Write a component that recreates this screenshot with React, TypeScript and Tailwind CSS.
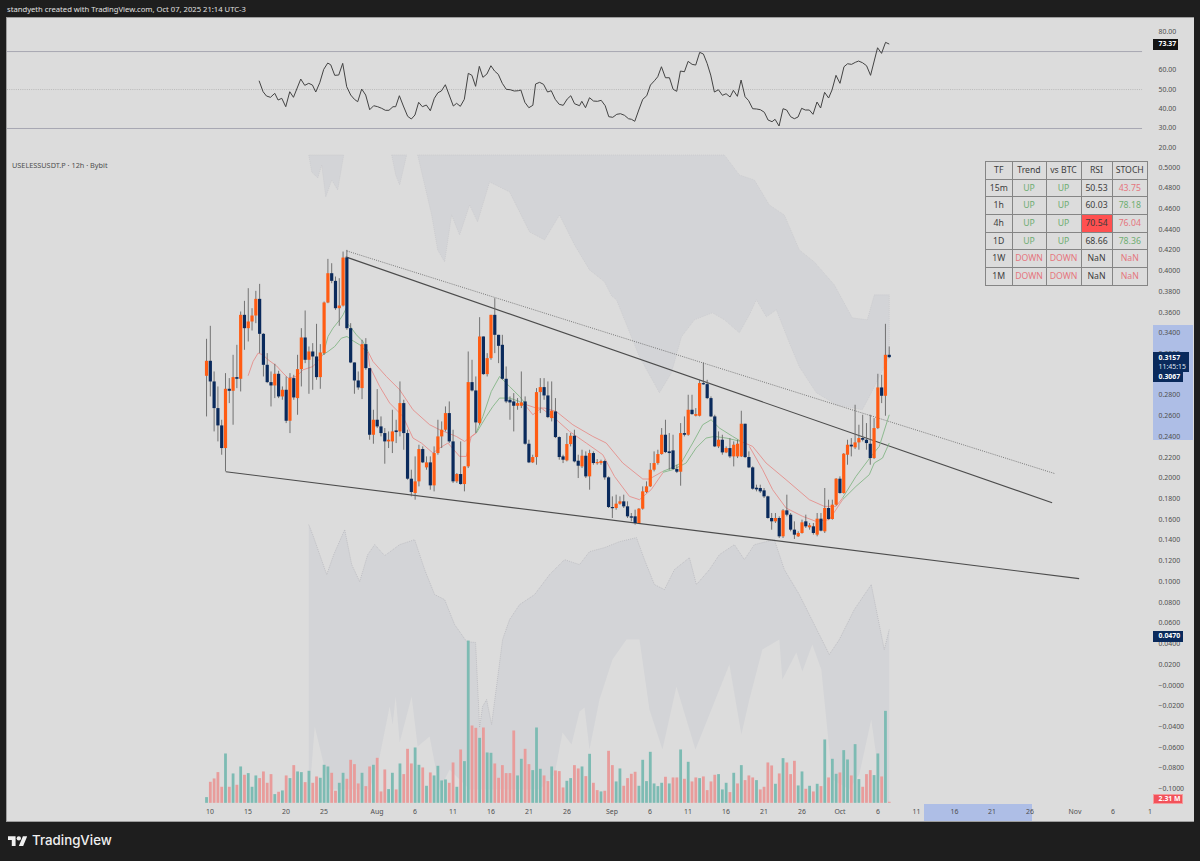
import React from "react";

type C = [number, number, number, number, number];
const A: C[] = [
[297,530,363,408,1],[258,470,363,425,0],[395,575,425,505,0],[440,605,505,557,0],[540,645,557,625,0],[400,695,447,625,1],[415,490,447,453,0],[345,555,412,453,1],[315,445,412,417,0],[215,455,225,417,1],
[183,330,225,265,0],[145,305,245,265,1],[205,272,227,245,1],[153,250,177,227,1],[132,340,177,282,0],[280,410,282,375,0],[340,430,375,427,0],[395,500,427,437,0],[372,475,402,437,1],[393,475,402,470,0],
[440,480,450,470,1],[410,550,450,543,0],[400,580,415,543,1],[405,480,415,473,0],[345,525,388,475,1],[265,440,293,388,1],[212,370,293,360,0],[320,462,335,360,1],[310,450,335,350,0],[252,420,350,412,0],
[313,447,338,412,1],[185,345,188,340,1],[57,190,100,188,1],[70,130,100,123,0],[110,210,123,205,0],[115,258,197,205,1],[35,200,53,197,1],[30,270,53,265,0],[250,370,265,368,0],[368,462,368,422,0],
[395,450,422,443,0],[300,478,313,445,1],[295,390,313,385,0],[385,600,385,585,0],[510,612,540,585,1],[448,565,540,560,0],[530,590,560,580,0],[565,672,580,605,0],[575,625,600,605,1],[510,640,575,605,1],
[540,610,572,577,0],[425,590,490,575,1],[480,630,490,580,0],[570,720,580,717,0],[690,770,717,757,0],[650,780,725,760,1],[615,740,628,725,1],[620,670,628,668,0],[650,690,668,683,1],[650,750,668,737,0],
[620,755,640,737,1],[540,645,590,640,1],[545,625,570,590,1],[500,575,520,570,1],[485,610,520,605,0],[570,730,605,725,0],[700,730,703,725,1],[605,735,703,733,0],[680,755,680,733,1],[335,685,427,680,1],
[360,455,427,452,0],[410,580,452,548,0],[232,555,290,550,1],[290,405,290,403,0],[340,410,355,403,1],[225,360,225,355,1],[175,340,225,285,0],[285,370,285,318,0],
];
const B: C[] = [
[105,240,135,237,0],[200,310,237,305,0],[290,360,300,308,0],[280,395,305,318,0],[295,330,310,318,1],[215,325,308,318,1],[290,435,305,432,0],[420,490,432,488,0],[465,490,472,488,1],[265,495,277,472,1],
[235,340,262,277,1],[235,300,262,287,0],[245,355,287,352,0],[245,365,333,355,1],[295,415,335,412,0],[410,480,412,472,0],[465,490,470,480,0],[400,485,433,482,1],[400,440,408,433,1],[390,488,408,485,0],
[465,535,483,498,0],[450,505,468,500,1],[455,535,468,530,0],[450,570,460,530,1],[455,495,460,490,0],[478,495,487,490,1],[480,495,484,490,1],[480,540,484,533,0],[530,625,533,622,0],[590,655,622,625,0],
[585,630,612,625,1],[590,615,605,612,1],[585,625,605,620,0],[605,655,620,650,0],[640,665,650,654,0],[630,675,650,670,0],[625,670,627,670,1],[560,630,575,627,1],[545,580,560,577,1],[490,562,510,560,1],
[455,515,490,510,1],[450,495,463,490,1],[385,465,405,463,1],[360,460,405,457,0],[400,510,455,460,0],[405,510,452,508,0],[495,520,508,516,0],[370,558,400,516,1],[350,410,400,405,0],[285,408,330,405,1],
[285,345,330,343,0],[325,350,343,348,1],[240,350,250,348,1],[188,255,250,253,0],[240,298,253,295,0],[290,352,295,350,0],[345,442,350,440,0],[395,445,420,440,1],[405,465,420,458,0],[440,460,445,458,1],
[415,475,445,470,0],[425,500,435,470,1],[420,475,432,470,1],[333,472,372,470,1],[372,475,372,472,0],[455,505,472,503,0],[500,570,503,567,0],[555,575,564,569,0],[555,580,565,575,0],[565,595,572,590,0],
[588,657,590,655,0],[640,690,655,665,0],[640,670,655,665,1],[650,715,655,710,0],[628,715,632,710,1],[585,650,632,645,0],[640,695,645,690,0],[665,718,690,705,0],[695,712,700,710,1],[660,702,668,700,1],
[645,685,665,680,0],[670,690,677,683,1],[670,705,680,700,0],[640,710,657,705,1],[640,695,657,693,0],[565,700,625,695,1],[600,660,625,658,0],[600,660,615,658,1],[535,618,537,615,1],[530,582,537,580,0],
[460,582,462,580,1],[420,495,435,465,1],[415,470,435,440,0],[315,448,428,443,1],[375,450,415,428,1],[345,425,415,420,0],[370,450,420,430,0],[345,495,432,475,0],[355,478,385,475,1],[222,388,263,385,1],
[225,310,263,288,0],[72,348,165,288,1],[140,175,165,172,0],
];
const bars: Array<[number, number]> = [
[473,1],[427,0],[417,0],[398,0],[442,0],[342,1],[442,0],[402,1],[436,0],[381,1],[406,0],[401,1],[442,1],[408,1],[416,0],[396,0],[430,0],[404,0],[464,1],[457,0],[453,1],[408,0],[416,1],[377,0],[396,1],[398,1],[428,0],[394,1],[430,0],[411,0],[415,1],[376,1],[381,1],[400,0],[454,0],[430,1],[400,1],[418,0],[361,0],[374,0],[432,0],[400,1],[440,0],[381,0],[376,1],[355,0],[456,0],[390,0],[449,1],[400,1],[450,0],[372,1],[404,0],[328,0],[372,0],[324,1],[376,1],[384,0],[439,1],[399,0],[408,1],[379,1],[423,1],[420,1],[430,0],[369,0],[442,1],[330,0],[365,1],[3,1],[258,0],[265,0],[295,1],[264,0],[339,1],[340,1],[372,0],[415,0],[377,0],[401,0],[401,0],[273,0],[408,1],[358,1],[328,0],[374,0],[392,1],[264,1],[388,1],[408,0],[425,0],
[381,1],[393,0],[395,0],[444,0],[424,1],[416,1],[377,0],[387,0],[381,1],[410,0],[343,1],[430,0],[452,0],[456,1],[454,0],[334,0],[377,0],[426,1],[387,1],[439,0],[416,0],[403,0],[397,0],[439,1],[361,1],[425,1],[337,1],[432,1],[440,1],[430,1],[412,0],[432,1],[414,0],[414,0],[330,1],[418,0],[367,1],[426,0],[414,0],[416,1],[411,0],[452,0],[426,0],[406,0],[404,1],[450,1],[430,1],[458,0],[400,1],[432,0],[377,1],[422,0],[408,0],[414,0],[422,1],[450,0],[442,0],[369,0],[378,0],[433,1],[402,0],[356,1],[369,0],[404,0],[364,0],[438,1],[396,1],[448,0],[439,1],[456,0],[433,1],[440,0],[300,1],[414,0],[358,1],[403,1],[399,0],[332,1],[360,1],[408,0],[314,1],[419,1],[442,0],[404,0],[392,0],[407,1],[342,1],[411,0],[214,1],[487,0],
];
const cx = (i: number) => 206.7 + 3.796 * i;
const candles = [
  ...A.map((c) => c.slice(0, 4).map((v) => 240 + v / 3).concat(c[4])),
  ...B.map((c) => c.slice(0, 4).map((v) => 300 + v / 3).concat(c[4])),
];
const pz = (a: number[][], ox: number, oy: number) => a.map(([x, y]) => `${(ox + x / 3).toFixed(1)},${(oy + y / 3).toFixed(1)}`).join(" ");
const rsi1 = [[28,122],[40,155],[50,168],[62,172],[75,160],[85,180],[96,175],[108,200],[120,155],[131,172],[153,117],[165,136],[177,130],[188,135],[198,156],[210,128],[222,88],[234,69],[243,74],[255,106],[267,105],[279,70],[291,140],[303,165],[314,178],[324,185],[336,147],[348,165],[360,209],[372,197],[384,200],[396,205],[407,211],[418,211],[430,200],[438,200],[449,167],[461,198],[474,229],[485,237],[496,225],[507,187],[518,200],[530,195],[542,212],[554,175],[565,158],[575,153],[587,134],[611,198],[621,190],[632,199],[644,178],[656,100],[667,106],[678,139],[689,79],[700,112],[712,102],[724,77],[735,93],[746,103],[758,130],[770,148],[782,149],[794,153],[806,152],[814,150],[826,187],[838,203],[850,196],[858,132],[870,127],[882,133],[894,156],[905,152],[917,178],[929,193],[941,196],[953,177],[964,167],[975,191],[990,197]];
const rsi2 = [[30,227],[37,214],[48,233],[60,203],[72,213],[84,214],[95,211],[107,227],[118,260],[130,262],[142,253],[153,251],[165,256],[177,266],[186,268],[196,274],[208,240],[220,208],[232,197],[243,165],[255,152],[265,140],[276,110],[288,143],[300,143],[311,178],[322,184],[333,123],[345,125],[356,94],[368,103],[379,105],[391,67],[402,72],[413,100],[424,135],[435,186],[447,179],[459,196],[470,191],[482,201],[492,181],[504,199],[515,150],[527,200],[538,212],[550,236],[562,237],[573,239],[585,247],[596,270],[608,275],[617,268],[629,288],[641,236],[652,240],[664,260],[675,266],[686,261],[697,235],[708,240],[720,240],[731,253],[743,216],[754,234],[766,187],[778,204],[788,180],[800,136],[812,160],[824,110],[835,101],[847,103],[858,97],[868,93],[880,98],[892,107],[904,136],[925,53],[937,70],[949,37],[960,42]];
const rsiPts = pz(rsi1, 250, 40) + " " + pz(rsi2, 570, 30);

const red: string[] = [
  pz([[145,408],[160,365],[175,340],[190,345],[205,360],[230,378],[250,400],[265,415],[290,410],[310,390],[340,380],[370,345]], 200, 240),
  pz([[505,335],[520,365],[560,410],[600,450],[640,510],[690,555],[720,570],[770,590],[795,605],[830,580]], 200, 240),
  pz([[505,340],[510,380],[540,440],[570,490],[610,530],[640,595],[665,610],[700,640],[720,625],[745,610],[780,650],[800,650],[815,590],[830,580]], 200, 240),
  pz([[80,315],[110,325],[135,325],[170,335],[220,375],[280,410],[320,430],[370,490],[430,538],[450,538],[490,515]], 500, 300),
  pz([[80,320],[100,345],[125,325],[165,355],[210,395],[260,430],[310,465],[345,530],[390,590],[420,600],[455,570],[490,520]], 500, 300),
  pz([[725,425],[760,440],[800,490],[860,540],[930,600],[975,620],[1010,620],[1030,595]], 500, 300),
  pz([[750,440],[790,510],[820,570],[860,625],[910,650],[950,665],[990,660],[1030,600]], 500, 300),
];
const green: string[] = [
  pz([[370,345],[385,290],[400,265],[420,240],[430,225],[442,200]], 200, 240),
  pz([[370,345],[385,335],[405,320],[425,295],[442,290]], 200, 240),
  pz([[442,250],[455,265],[470,285],[490,305],[505,335]], 200, 240),
  pz([[442,290],[455,300],[480,315],[505,340]], 200, 240),
  pz([[830,578],[850,530],[875,455],[900,410]], 200, 240) + " " + pz([[30,260],[60,290],[80,315]], 500, 300),
  pz([[830,580],[860,530],[880,500],[900,475]], 200, 240) + " " + pz([[30,295],[60,305],[80,320]], 500, 300),
  pz([[490,515],[515,505],[545,490],[580,430],[610,375],[635,360],[660,385],[700,410],[725,425]], 500, 300),
  pz([[490,518],[520,510],[560,490],[590,445],[620,415],[645,410],[680,415],[725,425]], 500, 300),
  pz([[1030,595],[1070,530],[1115,470],[1140,440],[1170,345]], 500, 300),
  pz([[1030,600],[1070,560],[1110,525],[1125,490],[1150,475],[1170,430]], 500, 300),
];
const cloudTop: string[] = [
  "309,155 312,172 318,178 322,165 326,197 332,180 338,190 344,155",
  "392,155 396,175 400,185 407,155",
  "418,155 425,185 432,215 438,250 445,262 452,215 460,235 470,205 478,222 490,182 510,192 530,232 545,240 560,215 575,245 590,270 605,282 612,296 617,300 640,357 660,393 672,373 682,337 695,320 713,313 725,320 740,333 750,315 757,300 767,317 777,310 790,343 800,367 817,393 837,405 863,410 870,397 880,377 890,357 890,295 875,295 868,320 853,318 835,285 815,262 800,250 785,215 770,205 755,180 740,175 725,155",
];
const cloudUpper = "309,525 313,535 320,555 327,575 334,555 345,530 352,565 360,582 368,555 375,545 385,556 400,545 415,540 425,570 435,595 445,600 455,625 467,642 476,643 480,728 483,707 487,700 492,725 503,640 510,620 520,605 535,595 550,575 565,560 580,565 590,552 605,548 620,542 637,538 645,560 655,585 665,590 675,570 690,558 697,585 710,570 720,555 735,545 745,560 755,545 775,540 785,570 800,595 815,625 830,655 840,640 855,610 872,585 880,625 885,650 890,630";
const cloudLower = "890,803 883,800 872,720 860,775 850,790 833,780 822,670 813,645 803,672 797,653 783,680 780,640 763,650 750,700 742,735 730,665 720,690 696,750 677,687 663,750 650,710 640,640 627,640 613,660 600,700 590,750 585,708 580,712 572,745 563,733 555,775 540,790 500,790 470,790 450,770 440,790 430,737 418,747 412,697 400,743 396,697 393,725 390,707 380,757 370,790 330,790 315,727 309,803";

const rsiLabels = ["80.00", "", "60.00", "50.00", "40.00", "30.00", "20.00"];
const priceLabels = ["0.5000","0.4800","0.4600","0.4400","0.4200","0.4000","0.3800","0.3600","0.3400","0.3200","0.3000","0.2800","0.2600","0.2400","0.2200","0.2000","0.1800","0.1600","0.1400","0.1200","0.1000","0.0800","0.0600","0.0400","0.0200","−0.0000","−0.0200","−0.0400","−0.0600","−0.0800","−0.1000"];
const times: Array<[string, number]> = [["10",210],["15",248],["20",286],["25",324],["Aug",377],["6",415],["11",453],["16",491],["21",529],["26",567],["Sep",612],["6",650],["11",688],["16",726],["21",764],["26",802],["Oct",840],["6",878],["11",916.5],["16",954.5],["21",992],["26",1030],["Nov",1075],["6",1113],["1",1150]];

const table = [
  ["15m", "UP", "UP", "50.53", "43.75", "r"],
  ["1h", "UP", "UP", "60.03", "78.18", "g"],
  ["4h", "UP", "UP", "70.54", "76.04", "r"],
  ["1D", "UP", "UP", "68.66", "78.36", "g"],
  ["1W", "DOWN", "DOWN", "NaN", "NaN", "r"],
  ["1M", "DOWN", "DOWN", "NaN", "NaN", "r"],
];
const cellB = "border border-[#858585] text-center font-normal p-0";

export default function App() {
  return (
    <div className="flex h-[861px] w-[1200px] flex-col overflow-hidden bg-[#1e1e1e] font-['Noto_Sans',sans-serif]">
      <div className="flex h-[17px] items-center pl-[7px] pt-[3px] text-[7.65px] text-[#e0e0e0]">
        standyeth created with TradingView.com, Oct 07, 2025 21:14 UTC-3
      </div>
      <div className="mx-[6px] flex h-[805px] flex-col border-b border-l border-t border-[#9d9d9d] bg-[#dcdcdc]">
        <div className="relative flex h-[786.5px]">
          <div className="relative w-[1147px]">
            <svg viewBox="7 18 1147 786.5" className="block h-full w-full">
              {cloudTop.map((p, i) => (
                <polygon key={i} points={p} fill="#d3d4d7" stroke="#c2c2c6" strokeWidth="0.5" strokeDasharray="1 1" />
              ))}
              <polygon points={cloudUpper + " " + cloudLower} fill="#d3d4d7" />
              <polyline points={cloudUpper} fill="none" stroke="#afafb5" strokeWidth="0.6" strokeDasharray="1 1" />
              <line x1="7" y1="51.5" x2="1143" y2="51.5" stroke="#a2a2ae" strokeWidth="0.9" />
              <line x1="7" y1="89.5" x2="1143" y2="89.5" stroke="#b0b0b0" strokeWidth="0.8" strokeDasharray="1 1.2" />
              <line x1="7" y1="128.5" x2="1143" y2="128.5" stroke="#a2a2ae" strokeWidth="0.9" />
              <polyline points={rsiPts} fill="none" stroke="#424242" strokeWidth="1" strokeLinejoin="round" />
              {bars.map(([t, c], i) => (
                <rect key={i} x={cx(i) - 1.4} y={640 + t / 3} width="2.8" height={Math.max(0.8, 163.4 - t / 3)} fill={c ? "#7dbbb3" : "#e89c9b"} />
              ))}
              <line x1="347" y1="251" x2="1056" y2="474" stroke="#5f5f5f" strokeWidth="0.8" strokeDasharray="1 1.2" />
              <line x1="346" y1="257" x2="1053" y2="503" stroke="#4c4c4c" strokeWidth="1.15" />
              <line x1="226" y1="472" x2="1080" y2="579" stroke="#4c4c4c" strokeWidth="1.15" />
              {red.map((p, i) => (
                <polyline key={i} points={p} fill="none" stroke="#e58f8b" strokeWidth="0.9" />
              ))}
              {green.map((p, i) => (
                <polyline key={i} points={p} fill="none" stroke="#84b687" strokeWidth="0.9" />
              ))}
              {candles.map((c, i) => (
                <g key={i}>
                  <line x1={cx(i)} x2={cx(i)} y1={c[0]} y2={c[1]} stroke="#666666" strokeWidth="0.9" />
                  <rect x={cx(i) - 1.6} y={c[2]} width="3.2" height={Math.max(1.2, c[3] - c[2])} fill={c[4] ? "#ff5c13" : "#0a2a5c"} />
                </g>
              ))}
            </svg>
            <div className="absolute left-[5px] top-[142px] text-[7.3px] text-[#4f4f4f]">USELESSUSDT.P · 12h · Bybit</div>
            <table className="absolute left-[978px] top-[143px] w-[162px] table-fixed border-collapse border border-[#777777] text-[8.7px] text-[#3c3c3c]">
              <colgroup>
                <col className="w-[26.5px]" />
                <col className="w-[34px]" />
                <col className="w-[35px]" />
                <col className="w-[31px]" />
                <col className="w-[35.5px]" />
              </colgroup>
              <thead>
                <tr className="h-[17.7px]">
                  {["TF", "Trend", "vs BTC", "RSI", "STOCH"].map((h) => (
                    <th key={h} className={cellB}>{h}</th>
                  ))}
                </tr>
              </thead>
              <tbody>
                {table.map((r) => {
                  const up = (v: string) => (v === "UP" ? "text-[#6fae72]" : "text-[#e5767e]");
                  return (
                    <tr key={r[0]} className="h-[17.7px]">
                      <td className={cellB}>{r[0]}</td>
                      <td className={`${cellB} ${up(r[1])}`}>{r[1]}</td>
                      <td className={`${cellB} ${up(r[2])}`}>{r[2]}</td>
                      <td className={r[0] === "4h" ? `${cellB} bg-[#ff5050]` : cellB}>{r[3]}</td>
                      <td className={`${cellB} ${r[5] === "g" ? "text-[#6fae72]" : "text-[#e5767e]"}`}>{r[4]}</td>
                    </tr>
                  );
                })}
              </tbody>
            </table>
          </div>
          <div className="relative flex w-[41px] flex-col pt-[4.3px] text-[6.9px] text-[#4f4f4f]">
            <div className="absolute left-0 right-[1px] top-[306.5px] h-[115.5px] bg-[#aebee6]" />
            {rsiLabels.map((l, i) => (
              <div key={i} className="relative flex h-[19.3px] items-center pl-[5.5px]">{l}</div>
            ))}
            {priceLabels.map((l) => (
              <div key={l} className="relative flex h-[20.73px] shrink-0 items-center pl-[5.5px]">{l}</div>
            ))}
            <div className="absolute left-0 top-[21px] flex h-[11px] w-[25px] items-center bg-[#131313] pl-[5.5px] font-bold text-white">73.37</div>
            <div className="absolute left-0 top-[334px] flex w-[36px] flex-col bg-[#0a2a5c] pb-[1px] pl-[5.5px] pt-[1px] leading-[9px] text-white">
              <span className="font-bold">0.3157</span>
              <span className="text-[#dfe5ef]">11:45:15</span>
            </div>
            <div className="absolute left-0 top-[353.5px] flex h-[10.5px] w-[30px] items-center bg-[#0a2a5c] pl-[5.5px] font-bold text-white">0.3067</div>
            <div className="absolute left-0 top-[613px] flex h-[10.5px] w-[30px] items-center bg-[#0a2a5c] pl-[5.5px] font-bold text-white">0.0470</div>
            <div className="absolute left-0 top-[776px] flex h-[10px] w-[30px] items-center border border-[#f59a9c] bg-[#f2525a] pl-[4.5px] font-bold text-white">2.31 M</div>
          </div>
        </div>
        <div className="relative flex h-[17px] items-center text-[6.9px] text-[#4f4f4f]">
          <div className="absolute bottom-0 left-[917px] top-0 w-[107.5px] bg-[#aebee6]" />
          {times.map(([t, x], i) => (
            <div key={i} className="relative flex w-0 justify-center whitespace-nowrap" style={{ marginLeft: i === 0 ? x - 7 : x - times[i - 1][1] }}>
              {t}
            </div>
          ))}
        </div>
      </div>
      <div className="flex flex-1 items-center gap-[5px] pb-[1.5px] pl-[7.5px] text-white">
        <svg viewBox="0 4 36 18" className="h-[10px] w-[19.5px]" fill="#f0f0f0">
          <path d="M14 22H7V11H0V4h14v18zM28 22h-8l7.5-18h8L28 22z" />
          <circle cx="20" cy="8" r="4" />
        </svg>
        <span className="font-['Inter',sans-serif] text-[13.3px] font-medium leading-none text-[#f0f0f0]">TradingView</span>
      </div>
    </div>
  );
}
